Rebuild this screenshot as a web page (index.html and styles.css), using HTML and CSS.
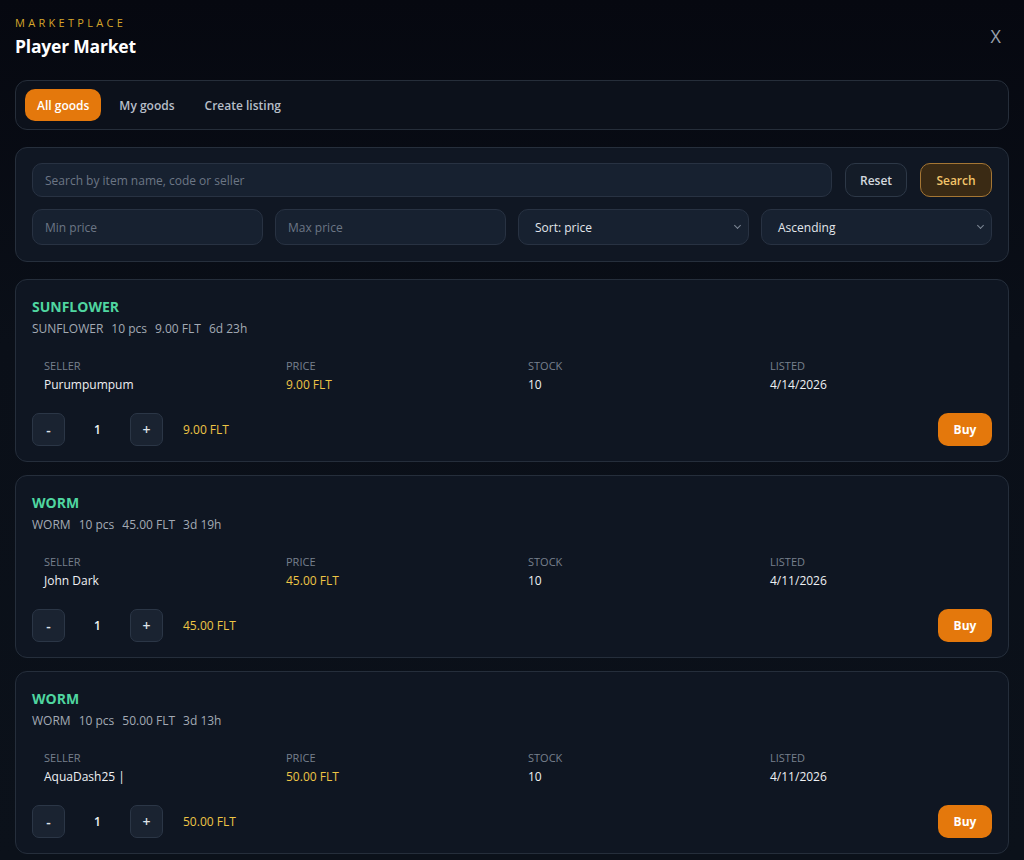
FILE: index.html
```html
<!DOCTYPE html>
<html lang="en">
<head>
<meta charset="utf-8">
<title>Player Market</title>
<link rel="stylesheet" href="styles.css">
</head>
<body>
<div class="page">
  <header class="header">
    <div class="titles">
      <div class="eyebrow">MARKETPLACE</div>
      <h1 class="title">Player Market</h1>
    </div>
    <button class="close">X</button>
  </header>

  <nav class="tabs">
    <button class="tab active">All goods</button>
    <button class="tab">My goods</button>
    <button class="tab">Create listing</button>
  </nav>

  <section class="filters">
    <div class="search-row">
      <input class="field search" placeholder="Search by item name, code or seller">
      <button class="btn reset">Reset</button>
      <button class="btn go">Search</button>
    </div>
    <div class="filter-row">
      <input class="field" placeholder="Min price">
      <input class="field" placeholder="Max price">
      <div class="select">Sort: price<span class="chev"></span></div>
      <div class="select">Ascending<span class="chev"></span></div>
    </div>
  </section>

  <section class="list">
    <article class="card">
      <div class="name">SUNFLOWER</div>
      <div class="meta"><span>SUNFLOWER</span><span>10 pcs</span><span>9.00 FLT</span><span>6d 23h</span></div>
      <div class="stats">
        <div><div class="label">SELLER</div><div class="value">Purumpumpum</div></div>
        <div><div class="label">PRICE</div><div class="value gold">9.00 FLT</div></div>
        <div><div class="label">STOCK</div><div class="value">10</div></div>
        <div><div class="label">LISTED</div><div class="value">4/14/2026</div></div>
      </div>
      <div class="actions">
        <button class="qbtn">-</button><span class="qty">1</span><button class="qbtn">+</button>
        <span class="total">9.00 FLT</span>
        <button class="buy">Buy</button>
      </div>
    </article>

    <article class="card">
      <div class="name">WORM</div>
      <div class="meta"><span>WORM</span><span>10 pcs</span><span>45.00 FLT</span><span>3d 19h</span></div>
      <div class="stats">
        <div><div class="label">SELLER</div><div class="value">John Dark</div></div>
        <div><div class="label">PRICE</div><div class="value gold">45.00 FLT</div></div>
        <div><div class="label">STOCK</div><div class="value">10</div></div>
        <div><div class="label">LISTED</div><div class="value">4/11/2026</div></div>
      </div>
      <div class="actions">
        <button class="qbtn">-</button><span class="qty">1</span><button class="qbtn">+</button>
        <span class="total">45.00 FLT</span>
        <button class="buy">Buy</button>
      </div>
    </article>

    <article class="card">
      <div class="name">WORM</div>
      <div class="meta"><span>WORM</span><span>10 pcs</span><span>50.00 FLT</span><span>3d 13h</span></div>
      <div class="stats">
        <div><div class="label">SELLER</div><div class="value">AquaDash25 |</div></div>
        <div><div class="label">PRICE</div><div class="value gold">50.00 FLT</div></div>
        <div><div class="label">STOCK</div><div class="value">10</div></div>
        <div><div class="label">LISTED</div><div class="value">4/11/2026</div></div>
      </div>
      <div class="actions">
        <button class="qbtn">-</button><span class="qty">1</span><button class="qbtn">+</button>
        <span class="total">50.00 FLT</span>
        <button class="buy">Buy</button>
      </div>
    </article>
  </section>
</div>
</body>
</html>
```

FILE: styles.css
```css
* { box-sizing: border-box; }
html, body { margin: 0; padding: 0; }
body {
  background: #070a11;
  font-family: "Open Sans", "Noto Sans", sans-serif;
  color: #e6e9ee;
  overflow: hidden;
  height: 860px;
}
.page {
  padding: 14px 15px 0 15px;
  background: linear-gradient(180deg, #060810 0%, #0a0f18 40%, #0b111a 100%);
  min-height: 860px;
}
.header {
  display: flex;
  justify-content: space-between;
  align-items: flex-start;
  height: 66px;
}
.eyebrow {
  font-size: 11px;
  letter-spacing: 3.3px;
  color: #d6a62a;
  line-height: 18px;
}
.title {
  margin: 0;
  margin-top: 1px;
  font-size: 17.5px;
  font-weight: 700;
  color: #ffffff;
  line-height: 26px;
  letter-spacing: -0.2px;
}
.close {
  background: none;
  border: none;
  color: #9aa2ad;
  font-family: inherit;
  font-size: 18px;
  margin-top: 10px;
  margin-right: 8px;
  padding: 0;
}
.tabs {
  display: flex;
  gap: 6px;
  padding: 8px 9px;
  border: 1px solid #262e3a;
  border-radius: 12px;
  background: #0c111b;
  height: 50px;
}
.tab {
  font-family: inherit;
  font-size: 12px;
  font-weight: 600;
  color: #b7bec8;
  background: transparent;
  border: none;
  border-radius: 10px;
  padding: 0 12px;
  height: 32px;
}
.tab.active {
  background: #e4780c;
  color: #ffffff;
}
.filters {
  margin-top: 17px;
  border: 1px solid #262f3c;
  border-radius: 12px;
  background: #101723;
  padding: 15px 16px 16px 16px;
  display: flex;
  flex-direction: column;
  gap: 12px;
}
.search-row {
  display: flex;
  gap: 13px;
}
.filter-row {
  display: grid;
  grid-template-columns: repeat(4, 1fr);
  gap: 12px;
}
.field, .select {
  font-family: inherit;
  font-size: 12px;
  height: 36px;
  border: 1px solid #283242;
  border-radius: 10px;
  background: #172130;
  color: #d8dde4;
  padding: 0 12px;
  outline: none;
}
.search-row .field { height: 34px; flex: 1; }
.field::placeholder { color: #6c7685; }
.select {
  display: flex;
  align-items: center;
  justify-content: space-between;
  padding: 0 8px 0 16px;
  color: #e2e6eb;
}
.chev {
  width: 5px;
  height: 5px;
  border-right: 1px solid #7d8794;
  border-bottom: 1px solid #7d8794;
  transform: rotate(45deg);
  margin-top: -3px;
}
.btn {
  font-family: inherit;
  font-size: 12px;
  font-weight: 600;
  height: 34px;
  border-radius: 10px;
  padding: 0 14px;
}
.btn.reset {
  width: 62px;
  background: #141c28;
  border: 1px solid #2d3847;
  color: #d3d8df;
}
.btn.go {
  width: 72px;
  background: #3a2a14;
  border: 1px solid #a57634;
  color: #f3c46a;
}
.list {
  margin-top: 17px;
  display: flex;
  flex-direction: column;
  gap: 13px;
}
.card {
  border: 1px solid #252e3b;
  border-radius: 12px;
  background: #0f1622;
  padding: 16px 16px 16px 16px;
  height: 183px;
}
.name {
  font-size: 14px;
  font-weight: 700;
  color: #4fd6a0;
  line-height: 22px;
}
.meta {
  display: flex;
  gap: 8px;
  font-size: 12px;
  color: #a3aab4;
  line-height: 18px;
  margin-top: 2px;
}
.stats {
  display: grid;
  grid-template-columns: repeat(4, 1fr);
  column-gap: 32px;
  padding: 0 12px;
  margin-top: 20px;
}
.label {
  font-size: 11px;
  color: #77808d;
  line-height: 16px;
}
.value {
  font-size: 12px;
  font-weight: 500;
  color: #eef0f3;
  line-height: 16px;
  margin-top: 3px;
}
.gold { color: #eec545; }
.actions {
  display: flex;
  align-items: center;
  margin-top: 20px;
}
.qbtn {
  width: 33px;
  height: 33px;
  border-radius: 7px;
  background: #1a2331;
  border: 1px solid #2b3646;
  color: #dfe3e8;
  font-family: inherit;
  font-size: 14px;
  font-weight: 600;
  padding: 0;
}
.qty {
  width: 65px;
  text-align: center;
  font-size: 12px;
  font-weight: 600;
  color: #f0f2f5;
}
.total {
  margin-left: 20px;
  font-size: 12px;
  font-weight: 500;
  color: #eec545;
}
.buy {
  margin-left: auto;
  width: 54px;
  height: 33px;
  border: none;
  border-radius: 10px;
  background: #e4780c;
  color: #ffffff;
  font-family: inherit;
  font-size: 12px;
  font-weight: 700;
}
```
